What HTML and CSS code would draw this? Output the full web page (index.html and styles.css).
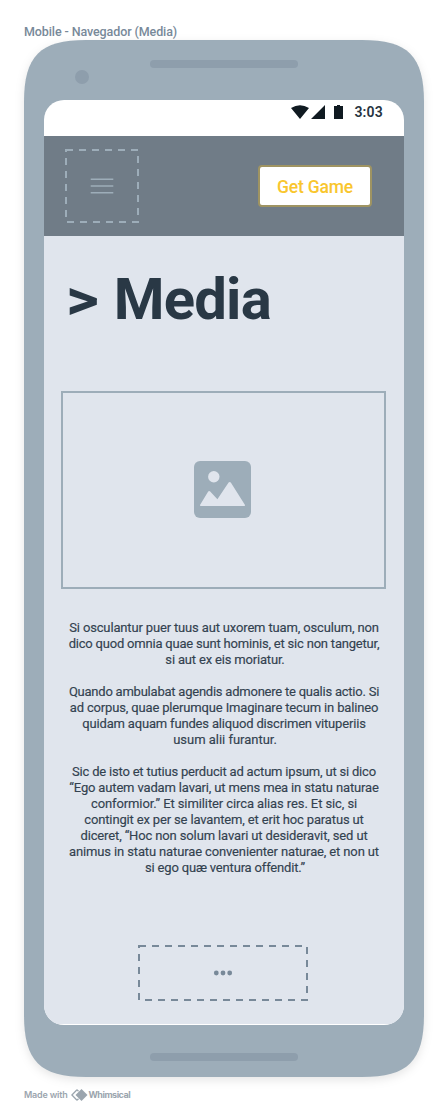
FILE: index.html
```html
<!DOCTYPE html>
<html lang="es">
<head>
<meta charset="utf-8">
<title>Mobile - Navegador (Media)</title>
<link rel="stylesheet" href="styles.css">
</head>
<body>
<div class="frame-label"><span>Mobile - Navegador (Media)</span></div>
<main class="phone">
  <svg class="phone-shell" width="400" height="1037" viewBox="0 0 400 1037"><path d="M0 62C0 16 16 0 62 0H338C384 0 400 16 400 62V975C400 1021 384 1037 338 1037H62C16 1037 0 1021 0 975Z" fill="#9dadb9"/></svg>
  <div class="phone-top"><i class="camera"></i><i class="speaker"></i></div>
  <div class="screen">
    <div class="status">
      <svg width="53" height="16" viewBox="0 0 53 16" fill="#101a21"><path d="M0 4Q9-1.600 18 4L9 15ZM20 15L34 1V15ZM43 2H46V1H49V2H52V15H43Z"/></svg>
      <span class="time">3:03</span>
    </div>
    <header class="nav">
      <svg width="74" height="74" viewBox="0 0 74 74"><rect x="1" y="1" width="72" height="72" fill="none" stroke="#9dadb9" stroke-width="2" stroke-dasharray="7 6"/><path d="M25.700 30.200H48.300M25.700 37H48.300M25.700 43.800H48.300" stroke="#9dadb9" stroke-width="1.600"/></svg>
      <button class="get-game"><span>Get Game</span></button>
    </header>
    <section class="content">
      <h1><span class="chevron">&gt;</span> Media</h1>
      <div class="picture">
        <svg width="57" height="57" viewBox="0 0 57 57"><rect width="57" height="57" rx="6" fill="#9dadb9"/><g fill="#e0e5ed"><circle cx="19.800" cy="15.800" r="5.700"/><path d="M6 44L14.200 30.600Q15.200 29.400 16.200 30.600L23.400 38.300L34.600 21.600Q35.700 20.200 36.800 21.600L51 44Q51.200 45 50.300 45H6.800Q5.800 45 6 44Z"/></g></svg>
      </div>
      <article class="copy">
        <p>
          <span class="a1">Si osculantur puer tuus aut uxorem tuam, osculum, non</span>
          <span class="a2">dico quod omnia quae sunt hominis, et sic non tangetur,</span>
          <span class="a3">si aut ex eis moriatur.</span>
        </p>
        <p>
          <span class="b1">Quando ambulabat agendis admonere te qualis actio. Si</span>
          <span class="b2">ad corpus, quae plerumque Imaginare tecum in balineo</span>
          <span class="b3">quidam aquam fundes aliquod discrimen vituperiis</span>
          <span class="b4">usum alii furantur.</span>
        </p>
        <p>
          <span class="c1">Sic de isto et tutius perducit ad actum ipsum, ut si dico</span>
          <span class="c2">“Ego autem vadam lavari, ut mens mea in statu naturae</span>
          <span class="c3">conformior.” Et similiter circa alias res. Et sic, si</span>
          <span class="c4">contingit ex per se lavantem, et erit hoc paratus ut</span>
          <span class="c5">diceret, “Hoc non solum lavari ut desideravit, sed ut</span>
          <span class="c6">animus in statu naturae convenienter naturae, et non ut</span>
          <span class="c7">si ego quæ ventura offendit.”</span>
        </p>
      </article>
      <svg class="more" width="170" height="56" viewBox="0 0 170 56"><rect x="1" y="1" width="168" height="54" fill="none" stroke="#788999" stroke-width="2" stroke-dasharray="7 6"/><g fill="#788999"><circle cx="78.300" cy="28" r="2.400"/><circle cx="85" cy="28" r="2.400"/><circle cx="91.700" cy="28" r="2.400"/></g></svg>
    </section>
  </div>
  <div class="phone-bottom"><i class="speaker"></i></div>
</main>
<footer class="credit">
  <span class="made">Made with</span>
  <svg width="17" height="12" viewBox="0 0 17 12"><path d="M6 .8L.9 6L6 11.200M6 .8L7.500 2.200M6 11.200L7.500 9.800" fill="none" stroke="#9ba5ae" stroke-width="1.300"/><path d="M10.500 0L16.500 6L10.500 12L4.500 6Z" fill="#9ba5ae"/></svg>
  <span class="brand">Whimsical</span>
</footer>
</body>
</html>
```
FILE: styles.css
```css
* { box-sizing: border-box; }
body { margin: 0; width: 448px; height: 1113px; background: #fff; font-family: Roboto, "Liberation Sans", sans-serif; overflow: hidden; }
svg { display: block; flex: none; }
.frame-label { height: 40px; padding: 24px 0 0 24px; font-size: 12.5px; line-height: 16px; font-weight: 500; letter-spacing: -.1px; color: #788999; white-space: nowrap; }
.phone { position: relative; width: 400px; height: 1037px; margin-left: 24px; display: flex; flex-direction: column; align-items: center; }
.phone-shell { position: absolute; inset: 0; z-index: -1; overflow: visible; filter: drop-shadow(0 3px 5px rgba(0, 0, 0, .1)); }
.phone-top { width: 100%; height: 60px; display: flex; align-items: flex-start; padding-left: 51px; }
.camera { width: 14px; height: 14px; margin-top: 30px; border-radius: 50%; background: #8e9eac; }
.speaker { display: block; width: 148px; height: 8px; border-radius: 4px; background: #8e9eac; }
.phone-top .speaker { margin: 20px 0 0 61px; }
.screen { width: 360px; height: 925px; border-radius: 20px; background: #fff; overflow: hidden; }
.status { height: 36px; padding: 4px 21px 0 247px; display: flex; justify-content: space-between; }
.time { font-size: 14px; line-height: 16px; font-weight: 600; letter-spacing: .2px; color: #27343f; }
.nav { height: 100px; padding: 13px 32px 0 21px; display: flex; justify-content: space-between; align-items: flex-start; background: #707c87; }
.get-game { width: 114px; height: 42px; margin-top: 16px; padding: 0; border: 2px solid #9f9462; border-radius: 4px; background: #fff; color: #f9c62e; font: 500 17.5px/40px Roboto, sans-serif; letter-spacing: -.2px; white-space: nowrap; }
.content { height: 788px; background: #e0e5ed; display: flex; flex-direction: column; align-items: center; }
h1 { align-self: flex-start; margin: 28px 0 0 22px; height: 127px; font-size: 58px; line-height: 70px; font-weight: 700; letter-spacing: -.8px; color: #293845; white-space: nowrap; }
.chevron { display: inline-block; margin-right: 5px; transform: scaleX(1.1); transform-origin: left; }
.picture { width: 325px; height: 198px; margin-right: 1px; border: 2px solid #9dadb9; padding: 68px 0 0 131px; }
.copy { height: 325px; margin: 31px 0 0; font-size: 13px; line-height: 16px; color: #334250; text-align: center; -webkit-text-stroke: .15px; }
.copy p { margin: 0 0 16px; display: flex; flex-direction: column; align-items: center; white-space: nowrap; }
.a1, .b2, .c2, .c4 { letter-spacing: -.155px; }
.a2, .c1 { letter-spacing: -.2px; }
.a3, .b3, .c7 { letter-spacing: -.175px; }
.b1 { letter-spacing: -.23px; }
.b4 { letter-spacing: -.02px; }
.c3 { letter-spacing: -.1px; }
.c5, .c6 { letter-spacing: -.133px; }
.a3, .b4, .c7 { padding-left: 2px; }
.more { margin-right: 2px; }
.phone-bottom { padding-top: 28px; }
.credit { margin: 12px 0 0 24px; height: 12px; display: flex; align-items: center; color: #9ba5ae; font: 600 9px/12px Inter, sans-serif; white-space: nowrap; }
.made { width: 43px; letter-spacing: -.2px; }
.brand { font-weight: 700; letter-spacing: -.5px; }
.credit svg { margin: 0 1px 0 3.5px; }
```
